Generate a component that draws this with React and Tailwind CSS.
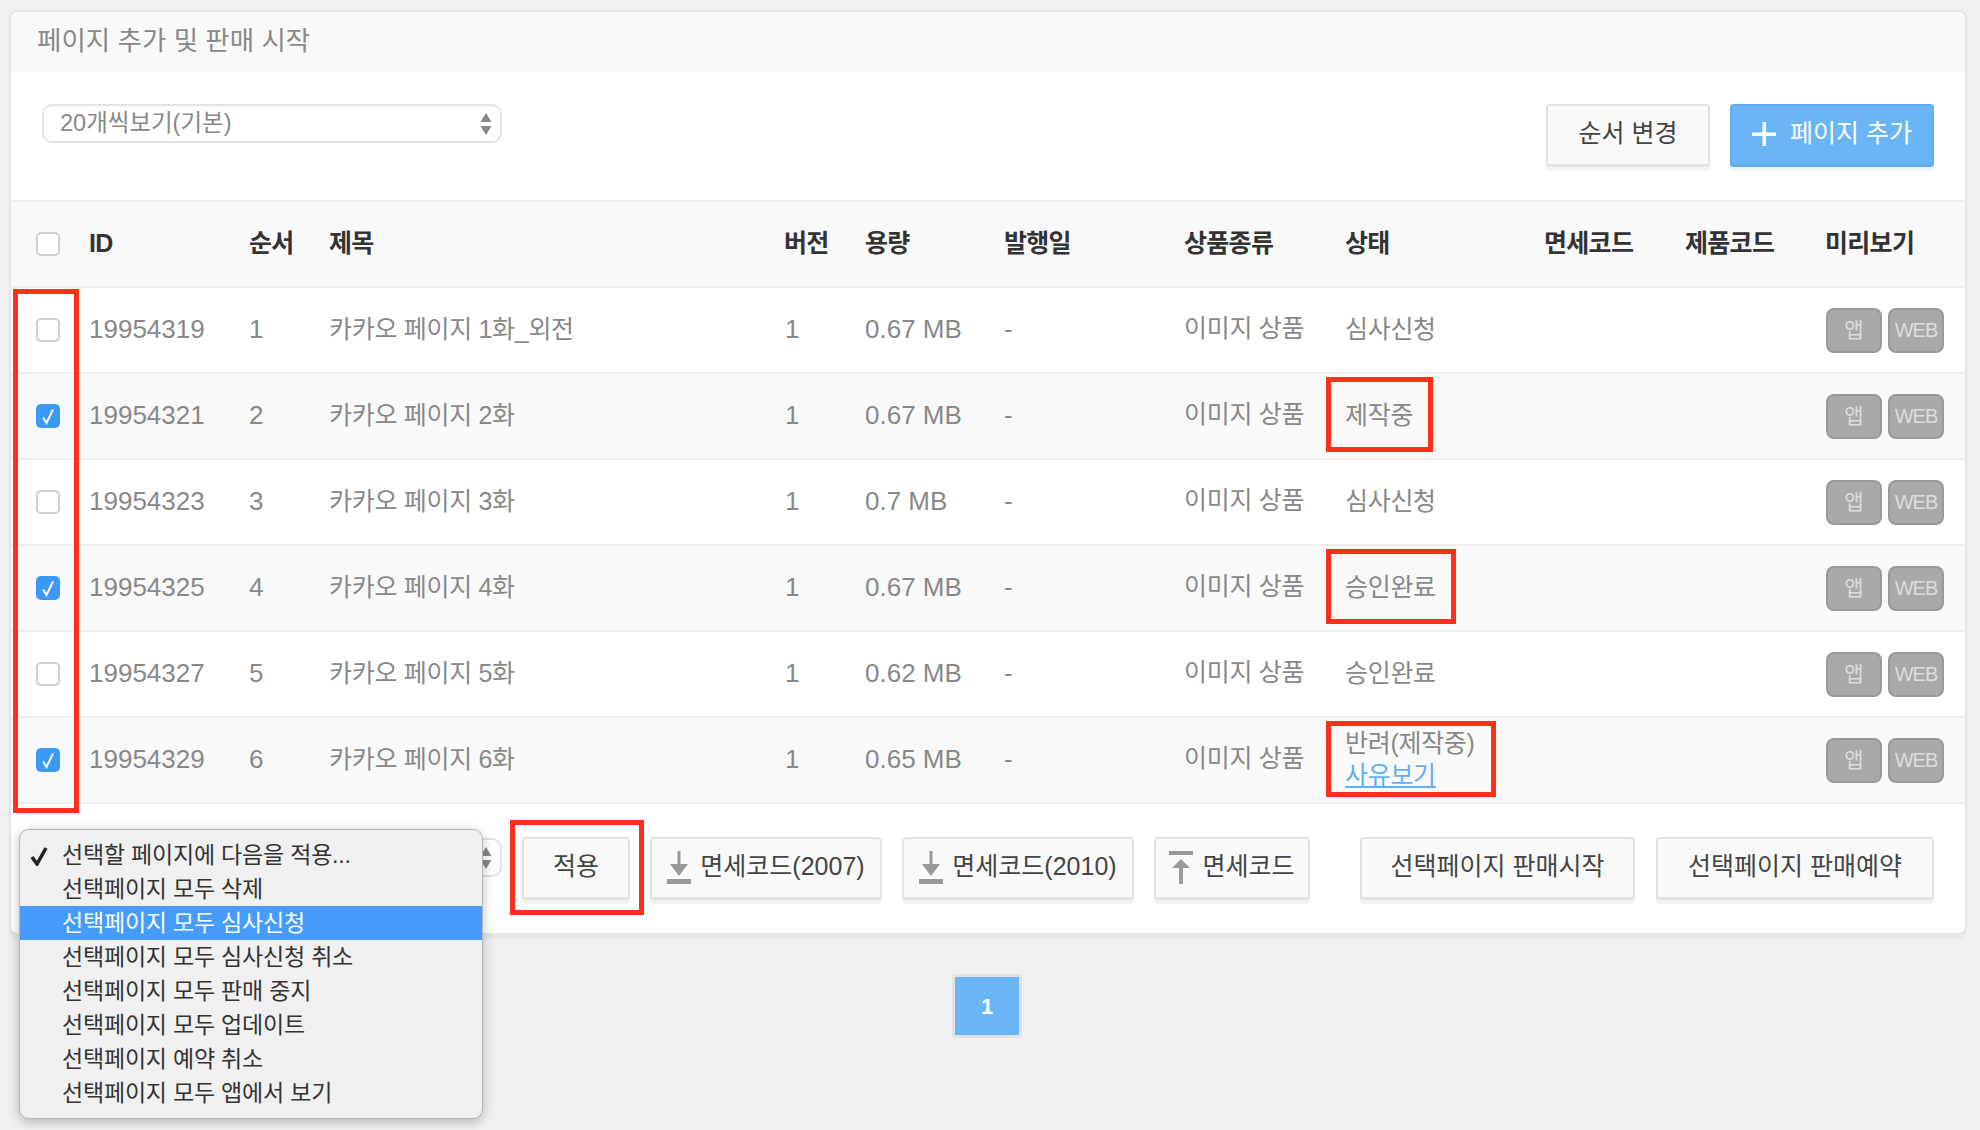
const fontStack = 'font-["Liberation_Sans","Noto_Sans_CJK_KR",sans-serif]';

const rows = [
  { id: '19954319', order: 1, title: '카카오 페이지 1화_외전', size: '0.67 MB', status: '심사신청', checked: false },
  { id: '19954321', order: 2, title: '카카오 페이지 2화', size: '0.67 MB', status: '제작중', checked: true },
  { id: '19954323', order: 3, title: '카카오 페이지 3화', size: '0.7 MB', status: '심사신청', checked: false },
  { id: '19954325', order: 4, title: '카카오 페이지 4화', size: '0.67 MB', status: '승인완료', checked: true },
  { id: '19954327', order: 5, title: '카카오 페이지 5화', size: '0.62 MB', status: '승인완료', checked: false },
  { id: '19954329', order: 6, title: '카카오 페이지 6화', size: '0.65 MB', status: '반려(제작중)', checked: true, rejected: true },
];

const headers = ['ID', '순서', '제목', '버전', '용량', '발행일', '상품종류', '상태', '면세코드', '제품코드', '미리보기'];

const menuItems = [
  '선택할 페이지에 다음을 적용...',
  '선택페이지 모두 삭제',
  '선택페이지 모두 심사신청',
  '선택페이지 모두 심사신청 취소',
  '선택페이지 모두 판매 중지',
  '선택페이지 모두 업데이트',
  '선택페이지 예약 취소',
  '선택페이지 모두 앱에서 보기',
];

function Checkbox({ checked }) {
  if (checked) {
    return (
      <span className="flex h-[24px] w-[24px] items-center justify-center rounded-[5px] bg-[#3b99fc]">
        <svg width="14" height="17" viewBox="0 0 14 17" fill="none">
          <path d="M2 9.5L5.5 15L12 1.5" stroke="white" strokeWidth="2" />
        </svg>
      </span>
    );
  }

  return <span className="block h-[24px] w-[24px] rounded-[5px] border-2 border-[#cfcfcf] bg-white" />;
}

function SelectBox({ label }) {
  return (
    <div className="flex h-[39px] w-[460px] items-center justify-between rounded-[10px] border-2 border-[#e2e2e2] bg-white pl-[16px] pr-[8px] text-[23.5px] text-[#888]">
      <span>{label}</span>
      <svg width="12" height="24" viewBox="0 0 12 24" fill="#888">
        <path d="M6 1L11.5 10H0.5Z" />
        <path d="M6 23L11.5 14H0.5Z" />
      </svg>
    </div>
  );
}

function Button({ children, className = '' }) {
  return (
    <button
      type="button"
      className={`flex h-[63px] items-center justify-center rounded-[4px] border-2 border-b-[3px] border-[#e2e2e2] bg-[#f9f9f9] pb-[2px] text-[25px] text-[#444] shadow-[0_4px_0_#f2f2f2] ${className}`}
    >
      {children}
    </button>
  );
}

function DownloadIcon() {
  return (
    <svg width="24" height="33" viewBox="0 0 24 33" fill="#999" className="shrink-0">
      <rect x="10.5" y="0" width="3" height="18" />
      <path d="M3 13H21L12 25Z" />
      <rect x="0" y="28" width="24" height="5" />
    </svg>
  );
}

function UploadIcon() {
  return (
    <svg width="24" height="33" viewBox="0 0 24 33" fill="#999" className="shrink-0">
      <rect x="0" y="0" width="24" height="4" />
      <path d="M3 17H21L12 8Z" />
      <rect x="10" y="16" width="4" height="17" />
    </svg>
  );
}

function PreviewButton({ children, small }) {
  return (
    <span
      className={`flex h-[45px] w-[56px] items-center justify-center rounded-[8px] border-2 border-[#999] bg-[#a9a9a9] text-[#dddddd] ${
        small ? 'text-[20px] tracking-[-1px]' : 'text-[21px]'
      }`}
    >
      {children}
    </span>
  );
}

function RedBox({ className }) {
  return <div className={`absolute border-[5px] border-[#ff2f1b] ${className}`} />;
}

export default function App() {
  return (
    <div className={`relative min-h-screen overflow-hidden bg-[#f0f0f0] pl-[9px] pt-[10px] ${fontStack}`}>
      <div className="w-[1958px] overflow-hidden rounded-[8px] border-2 border-[#e4e4e4] bg-white shadow-[0_4px_0_#e8e8e8]">
        <div className="flex h-[60px] items-center bg-[#f9f9f9] pl-[26px] text-[26.5px] text-[#888]">
          페이지 추가 및 판매 시작
        </div>

        <div className="flex h-[130px] items-start justify-between border-b-2 border-[#eeeeee] pl-[31px] pr-[31px] pt-[32px]">
          <SelectBox label="20개씩보기(기본)" />
          <div className="flex gap-[20px]">
            <Button className="w-[164px]">순서 변경</Button>
            <button
              type="button"
              className="flex h-[63px] w-[204px] items-center justify-center gap-[14px] rounded-[4px] border-2 border-b-[3px] border-[#5fabec] bg-[#69b5f5] pb-[2px] text-[25px] text-white shadow-[0_4px_0_#f2f2f2]"
            >
              <svg width="24" height="24" viewBox="0 0 24 24" fill="white">
                <rect x="10.5" y="0" width="3.5" height="24" />
                <rect x="0" y="10.5" width="24" height="3.5" />
              </svg>
              페이지 추가
            </button>
          </div>
        </div>

        <table className="w-full table-fixed border-collapse text-left">
          <colgroup>
            <col className="w-[78px]" />
            <col className="w-[160px]" />
            <col className="w-[80px]" />
            <col className="w-[455px]" />
            <col className="w-[81px]" />
            <col className="w-[139px]" />
            <col className="w-[180px]" />
            <col className="w-[161px]" />
            <col className="w-[199px]" />
            <col className="w-[141px]" />
            <col className="w-[140px]" />
            <col />
          </colgroup>
          <thead>
            <tr className="h-[85px] border-b-2 border-[#eeeeee] bg-[#f9f9f9] text-[25px] text-[#333]">
              <th className="pl-[25px] font-normal">
                <Checkbox checked={false} />
              </th>
              {headers.map((header) => (
                <th key={header} className="p-0 font-bold tracking-[-0.7px]">
                  {header}
                </th>
              ))}
            </tr>
          </thead>
          <tbody className="text-[25px] text-[#888]">
            {rows.map((row, index) => (
              <tr key={row.id} className={`h-[86px] border-b-2 border-[#eeeeee] ${index % 2 === 1 ? 'bg-[#f9f9f9]' : 'bg-white'}`}>
                <td className="pl-[25px]">
                  <Checkbox checked={row.checked} />
                </td>
                <td className="pb-[2px] text-[26px]">{row.id}</td>
                <td className="pb-[2px] text-[26px]">{row.order}</td>
                <td className="pb-[1px] tracking-[-0.3px]">{row.title}</td>
                <td className="pb-[2px] pl-[1px] text-[26px]">1</td>
                <td className="pb-[2px] text-[26px]">{row.size}</td>
                <td className="pb-[2px] text-[26px]">-</td>
                <td className="pb-[2px] tracking-[-0.3px]">이미지 상품</td>
                <td className="pb-[2px] leading-[32px] tracking-[-0.3px]">
                  {row.status}
                  {row.rejected ? (
                    <a className="block text-[#5fb0f6] underline" href="#reason">
                      사유보기
                    </a>
                  ) : null}
                </td>
                <td />
                <td />
                <td className="pl-[1px]">
                  <div className="flex gap-[6px]">
                    <PreviewButton>앱</PreviewButton>
                    <PreviewButton small>WEB</PreviewButton>
                  </div>
                </td>
              </tr>
            ))}
          </tbody>
        </table>

        <div className="flex h-[129px] items-start justify-between pl-[31px] pr-[31px] pt-[33px]">
          <div className="flex items-start gap-[20px]">
            <div className="pt-[1px]">
              <SelectBox label="" />
            </div>
            <Button className="w-[108px]">적용</Button>
            <Button className="w-[232px] gap-[9px] text-[25.5px]">
              <DownloadIcon />
              면세코드(2007)
            </Button>
            <Button className="w-[232px] gap-[9px] text-[25.5px]">
              <DownloadIcon />
              면세코드(2010)
            </Button>
            <Button className="w-[156px] gap-[9px] text-[25.5px]">
              <UploadIcon />
              면세코드
            </Button>
          </div>
          <div className="flex items-start gap-[21px]">
            <Button className="w-[275px]">선택페이지 판매시작</Button>
            <Button className="w-[278px]">선택페이지 판매예약</Button>
          </div>
        </div>
      </div>

      <div className="mt-[39px] flex w-[1958px] justify-center pr-[2px]">
        <div className="flex h-[64px] w-[70px] items-center justify-center rounded-[3px] border-[3px] border-[#e2e2e2] bg-[#69b5f5] text-[22px] font-bold text-white">
          1
        </div>
      </div>

      <div className="absolute left-[19px] top-[829px] w-[464px] rounded-[10px] border border-[#b5b5b5] bg-[#f0f0f0] pb-[8px] pt-[8px] text-[23px] tracking-[-0.2px] text-[#333] shadow-[0_3px_12px_rgba(0,0,0,0.25)]">
        {menuItems.map((item, index) => (
          <div
            key={item}
            className={`relative flex h-[34px] items-center pl-[42px] ${index === 2 ? 'bg-[#459cfd] text-white' : ''}`}
          >
            {index === 0 ? (
              <svg width="18" height="20" viewBox="0 0 18 20" fill="none" className="absolute left-[10px] top-[8px]">
                <path d="M2 11L7 18L16 2" stroke="#222" strokeWidth="3.5" />
              </svg>
            ) : null}
            {item}
          </div>
        ))}
      </div>

      <RedBox className="left-[13px] top-[289px] h-[524px] w-[66px]" />
      <RedBox className="left-[1326px] top-[377px] h-[75px] w-[107px]" />
      <RedBox className="left-[1326px] top-[549px] h-[75px] w-[130px]" />
      <RedBox className="left-[1326px] top-[721px] h-[76px] w-[170px]" />
      <RedBox className="left-[510px] top-[820px] h-[95px] w-[134px]" />
    </div>
  );
}
